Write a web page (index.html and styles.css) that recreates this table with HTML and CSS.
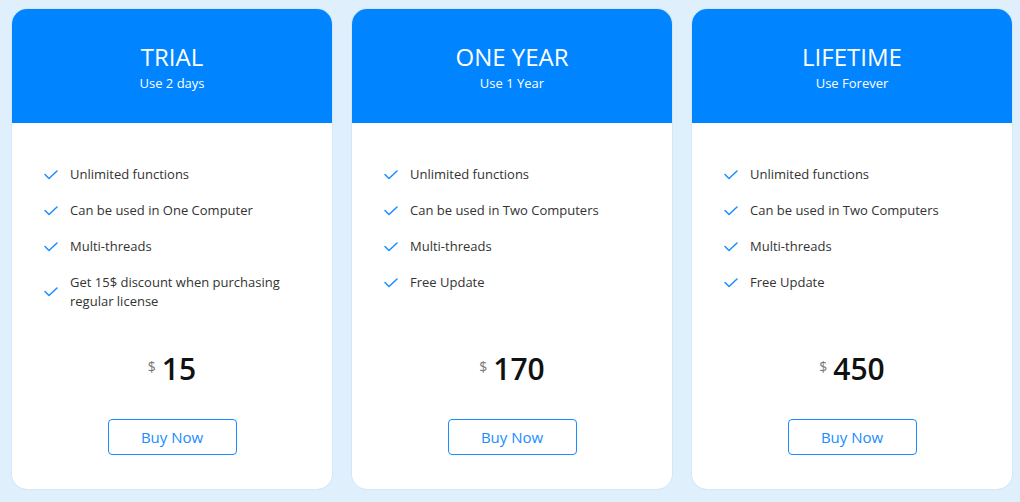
FILE: index.html
```html
<!DOCTYPE html>
<html>
<head>
<meta charset="utf-8">
<link rel="stylesheet" href="styles.css">
</head>
<body>
<div class="plans">
  <div class="card">
    <div class="head">
      <div class="title">TRIAL</div>
      <div class="sub">Use 2 days</div>
    </div>
    <div class="body">
      <ul class="feats">
        <li><svg class="chk" viewBox="0 0 14 10"><polyline points="1,4.5 5,8.5 13,1"/></svg><span>Unlimited functions</span></li>
        <li><svg class="chk" viewBox="0 0 14 10"><polyline points="1,4.5 5,8.5 13,1"/></svg><span>Can be used in One Computer</span></li>
        <li><svg class="chk" viewBox="0 0 14 10"><polyline points="1,4.5 5,8.5 13,1"/></svg><span>Multi-threads</span></li>
        <li><svg class="chk" viewBox="0 0 14 10"><polyline points="1,4.5 5,8.5 13,1"/></svg><span>Get 15$ discount when purchasing regular license</span></li>
      </ul>
      <div class="price"><span class="cur">$</span><span class="amt">15</span></div>
      <button class="buy">Buy Now</button>
    </div>
  </div>
  <div class="card">
    <div class="head">
      <div class="title">ONE YEAR</div>
      <div class="sub">Use 1 Year</div>
    </div>
    <div class="body">
      <ul class="feats">
        <li><svg class="chk" viewBox="0 0 14 10"><polyline points="1,4.5 5,8.5 13,1"/></svg><span>Unlimited functions</span></li>
        <li><svg class="chk" viewBox="0 0 14 10"><polyline points="1,4.5 5,8.5 13,1"/></svg><span>Can be used in Two Computers</span></li>
        <li><svg class="chk" viewBox="0 0 14 10"><polyline points="1,4.5 5,8.5 13,1"/></svg><span>Multi-threads</span></li>
        <li><svg class="chk" viewBox="0 0 14 10"><polyline points="1,4.5 5,8.5 13,1"/></svg><span>Free Update</span></li>
      </ul>
      <div class="price"><span class="cur">$</span><span class="amt">170</span></div>
      <button class="buy">Buy Now</button>
    </div>
  </div>
  <div class="card">
    <div class="head">
      <div class="title">LIFETIME</div>
      <div class="sub">Use Forever</div>
    </div>
    <div class="body">
      <ul class="feats">
        <li><svg class="chk" viewBox="0 0 14 10"><polyline points="1,4.5 5,8.5 13,1"/></svg><span>Unlimited functions</span></li>
        <li><svg class="chk" viewBox="0 0 14 10"><polyline points="1,4.5 5,8.5 13,1"/></svg><span>Can be used in Two Computers</span></li>
        <li><svg class="chk" viewBox="0 0 14 10"><polyline points="1,4.5 5,8.5 13,1"/></svg><span>Multi-threads</span></li>
        <li><svg class="chk" viewBox="0 0 14 10"><polyline points="1,4.5 5,8.5 13,1"/></svg><span>Free Update</span></li>
      </ul>
      <div class="price"><span class="cur">$</span><span class="amt">450</span></div>
      <button class="buy">Buy Now</button>
    </div>
  </div>
</div>
</body>
</html>
```

FILE: styles.css
```css
* { box-sizing: border-box; }
html, body { margin: 0; padding: 0; }
body {
  background: #dff0fc;
  font-family: "Open Sans", "Noto Sans", sans-serif;
  width: 1020px;
  height: 502px;
  overflow: hidden;
}
.plans {
  display: grid;
  grid-template-columns: repeat(3, 320px);
  gap: 20px;
  padding: 9px 0 0 12px;
}
.card {
  height: 480px;
  background: #fff;
  box-shadow: 0 0 0 1px #d2e7f8;
  border-radius: 15px;
  overflow: hidden;
  display: flex;
  flex-direction: column;
}
.head {
  background: #0084ff;
  color: #fff;
  height: 114px;
  text-align: center;
  padding-top: 33px;
}
.title {
  font-size: 24px;
  line-height: 30px;
}
.sub {
  font-size: 13px;
  line-height: 18px;
  margin-top: 2px;
}
.body {
  flex: 1;
  display: flex;
  flex-direction: column;
  align-items: center;
  padding: 42px 0 34px;
}
.feats {
  list-style: none;
  margin: 0;
  padding: 0 0 0 32px;
  align-self: stretch;
  flex: 1;
  display: flex;
  flex-direction: column;
  gap: 17px;
}
.feats li {
  display: flex;
  align-items: center;
  font-size: 13px;
  line-height: 19px;
  color: #333;
}
.chk {
  width: 14px;
  height: 10px;
  flex: none;
  margin-right: 12px;
  fill: none;
  stroke: #1a8cff;
  stroke-width: 1.5;
  stroke-linecap: round;
  stroke-linejoin: round;
}
.feats span { max-width: 240px; }
.price {
  display: flex;
  align-items: flex-start;
  color: #111;
  height: 40px;
}
.cur {
  font-size: 14px;
  color: #777;
  margin-top: 8px;
  margin-right: 6px;
}
.amt {
  font-size: 30px;
  font-weight: 600;
  line-height: 40px;
}
.buy {
  margin-top: 30px;
  width: 129px;
  height: 36px;
  background: #fff;
  border: 1px solid #1a8cff;
  border-radius: 4px;
  color: #1a8cff;
  font-family: "Open Sans", "Noto Sans", sans-serif;
  font-size: 15px;
  padding: 0;
}
```
